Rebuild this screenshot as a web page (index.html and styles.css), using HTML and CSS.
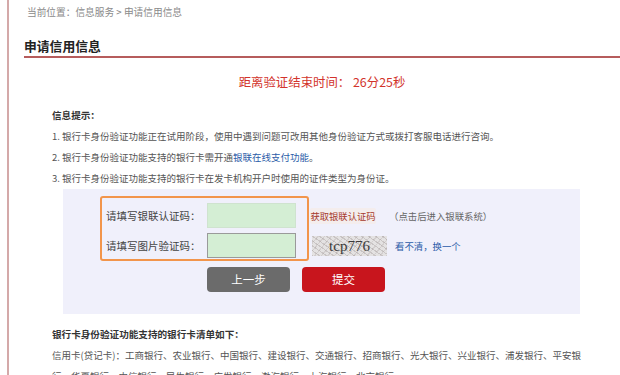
FILE: index.html
```html
<!DOCTYPE html>
<html lang="zh-CN">

	<head>
		<meta charset="UTF-8">
		<title>申请信用信息</title>
		<link rel="stylesheet" href="styles.css">
	</head>

	<body>
		<div class="page">
			<div class="crumb">当前位置：信息服务 &gt; 申请信用信息</div>
			<h2 class="title">申请信用信息</h2>

			<div class="countdown">距离验证结束时间： 26分25秒</div>

			<div class="content">
				<p class="tip-head">信息提示：</p>
				<p class="tip">1. 银行卡身份验证功能正在试用阶段，使用中遇到问题可改用其他身份验证方式或拨打客服电话进行咨询。</p>
				<p class="tip">2. 银行卡身份验证功能支持的银行卡需开通<a href="javascript:void(0);" class="link">银联在线支付功能</a>。</p>
				<p class="tip">3. 银行卡身份验证功能支持的银行卡在发卡机构开户时使用的证件类型为身份证。</p>

				<div class="verify-box">
					<div class="verify-rows">
						<div class="highlight">
							<div class="row">
								<label class="label">请填写银联认证码：</label>
								<input type="text" class="code-input">
							</div>
							<div class="row">
								<label class="label">请填写图片验证码：</label>
								<input type="text" class="code-input dark">
							</div>
						</div>
						<div class="side">
							<div class="row">
								<a href="javascript:void(0);" class="get-code">获取银联认证码</a>
								<span class="hint">（点击后进入银联系统）</span>
							</div>
							<div class="row">
								<span class="captcha">tcp776</span>
								<a href="javascript:void(0);" class="link refresh">看不清，换一个</a>
							</div>
						</div>
					</div>
					<div class="actions">
						<a href="javascript:void(0);" class="btn btn-back">上一步</a>
						<a href="javascript:void(0);" class="btn btn-submit">提交</a>
					</div>
				</div>

				<p class="tip-head bank-head">银行卡身份验证功能支持的银行卡清单如下：</p>
				<p class="tip bank-list">信用卡(贷记卡)：工商银行、农业银行、中国银行、建设银行、交通银行、招商银行、光大银行、兴业银行、浦发银行、平安银行、华夏银行、中信银行、民生银行、广发银行、渤海银行、上海银行、北京银行</p>
			</div>
		</div>
	</body>

</html>
```

FILE: styles.css
```css
html,
body,
p,
h2 {
	padding: 0;
	margin: 0;
}

html,
body {
	overflow: hidden;
}

body {
	background: #fff;
	font-family: "Noto Sans CJK SC", "Liberation Sans", sans-serif;
	color: #555;
}

a {
	text-decoration: none;
}

.page {
	margin-left: 7px;
	padding-left: 15px;
	border-left: 2px solid #d4a9a9;
	min-height: 400px;
}

.crumb {
	padding-left: 3px;
	height: 24px;
	line-height: 24px;
	font-size: 9.7px;
	color: #8a8a8a;
}

.title {
	margin-top: 12px;
	line-height: 20px;
	font-size: 12.8px;
	font-weight: bold;
	color: #222;
	border-bottom: 2px solid #b65c5c;
}

.countdown {
	margin-top: 14px;
	line-height: 20px;
	text-align: center;
	font-size: 12.4px;
	color: #d2332b;
}

.content {
	margin-top: 13px;
	padding-left: 28px;
	width: 534px;
}

.tip-head {
	line-height: 21px;
	font-size: 9.6px;
	font-weight: bold;
	color: #333;
}

.tip {
	line-height: 21px;
	font-size: 9.5px;
	color: #555;
	white-space: nowrap;
}

.link {
	color: #2b5ca8;
}

.verify-box {
	margin-left: 11px;
	width: 480px;
	padding: 7px 0 22px 37px;
	background: #f0f0fb;
}

.verify-rows {
	display: flex;
}

.highlight {
	padding: 5px 11px 1px 4px;
	border: 2px solid #f2954b;
	border-radius: 3px;
	display: flex;
	flex-direction: column;
	gap: 5px;
}

.row {
	display: flex;
	align-items: center;
	height: 25px;
}

.label {
	width: 101px;
	font-size: 10.5px;
	color: #444;
}

.code-input {
	box-sizing: border-box;
	width: 89px;
	height: 25px;
	margin: 0;
	background: #d4eed4;
	border: 1px solid #cfe3cf;
}

.code-input.dark {
	border-color: #9a9a9a;
}

.side {
	padding-top: 7px;
	display: flex;
	flex-direction: column;
	gap: 5px;
}

.get-code {
	margin-left: 1px;
	width: 66px;
	height: 16px;
	line-height: 16px;
	text-align: center;
	font-size: 9.3px;
	color: #a63a2c;
	background: #f4eded;
	border-radius: 2px;
}

.hint {
	margin-left: 13px;
	font-size: 9.4px;
	color: #666;
}

.captcha {
	margin-left: 3px;
	width: 75px;
	height: 20px;
	line-height: 20px;
	text-align: center;
	font-family: "Liberation Serif", serif;
	font-size: 15px;
	color: #3a3a3a;
	background-color: #e4e2e2;
	background-image:
		repeating-linear-gradient(35deg, rgba(150, 140, 140, 0.35) 0 1px, transparent 1px 4px),
		repeating-linear-gradient(-50deg, rgba(170, 160, 160, 0.3) 0 1px, transparent 1px 5px);
}

.refresh {
	margin-left: 8px;
	font-size: 9.4px;
}

.actions {
	margin-top: 6px;
	margin-left: 107px;
	display: flex;
	gap: 12px;
}

.btn {
	display: block;
	width: 83px;
	height: 25px;
	line-height: 25px;
	text-align: center;
	border-radius: 4px;
	font-size: 11.5px;
	color: #fff;
}

.btn-back {
	background: #6b6b6b;
}

.btn-submit {
	background: #c8151d;
}

.bank-head {
	margin-top: 10px;
}

.bank-list {
	white-space: normal;
}
```
